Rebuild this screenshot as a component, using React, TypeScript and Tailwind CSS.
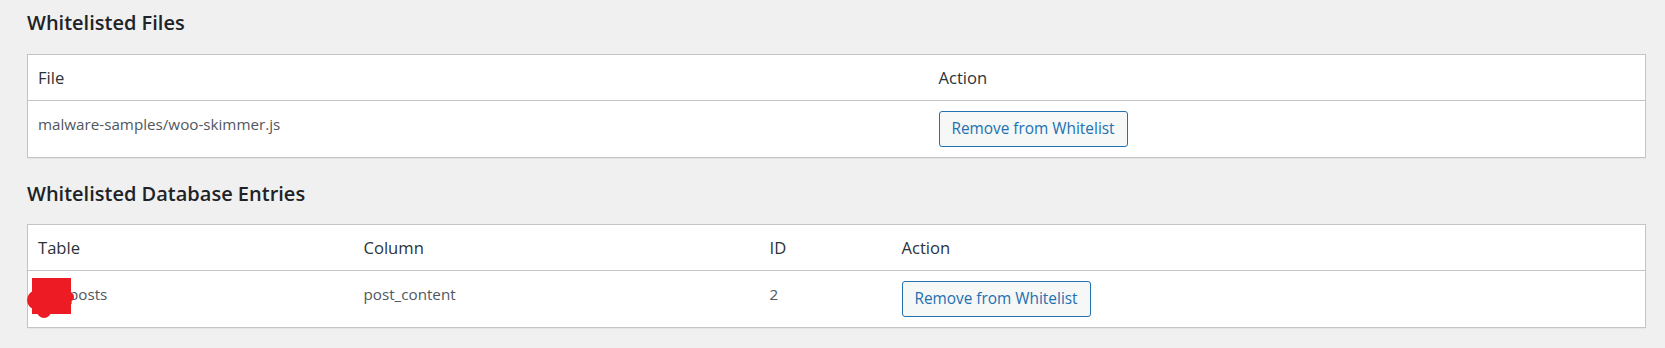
import React from "react";

const font = { fontFamily: '"Open Sans", "Noto Sans", Arial, sans-serif' };

function Btn() {
  return (
    <button className="h-[36px] w-[189px] rounded-[3px] border border-[#2271b1] bg-[#f6f7f7] text-[15.4px] leading-[34px] text-[#2271b1]">
      Remove from Whitelist
    </button>
  );
}

const th = "px-[10px] text-left align-middle text-[16.6px] leading-[20px] font-normal text-[#2c3338]";
const td = "px-[10px] pt-[13px] align-top text-[15.2px] leading-[20px] text-[#50575e]";

export default function App() {
  return (
    <div className="min-h-[348px] bg-[#f0f0f1] pl-[27px] pr-[19px] pt-[9px] pb-[20px]" style={font}>
      <h2 className="m-0 text-[20px] font-semibold leading-[28px] text-[#1d2327]">Whitelisted Files</h2>
      <table className="mt-[17px] w-full table-fixed border-collapse border border-[#c3c4c7] bg-white shadow-[0_1px_1px_rgba(0,0,0,0.04)]">
        <colgroup>
          <col className="w-[901px]" />
          <col />
        </colgroup>
        <thead>
          <tr className="h-[46px] border-b border-[#c3c4c7]">
            <th className={th}>File</th>
            <th className={th}>Action</th>
          </tr>
        </thead>
        <tbody>
          <tr className="h-[57px]">
            <td className={td}>malware-samples/woo-skimmer.js</td>
            <td className="px-[10px] pt-[10px] pb-[10px] align-top">
              <Btn />
            </td>
          </tr>
        </tbody>
      </table>

      <h2 className="mt-[22px] text-[20px] font-semibold leading-[28px] text-[#1d2327]">Whitelisted Database Entries</h2>
      <table className="mt-[16px] w-full table-fixed border-collapse border border-[#c3c4c7] bg-white shadow-[0_1px_1px_rgba(0,0,0,0.04)]">
        <colgroup>
          <col className="w-[326px]" />
          <col className="w-[406px]" />
          <col className="w-[132px]" />
          <col />
        </colgroup>
        <thead>
          <tr className="h-[46px] border-b border-[#c3c4c7]">
            <th className={th}>Table</th>
            <th className={th}>Column</th>
            <th className={th}>ID</th>
            <th className={th}>Action</th>
          </tr>
        </thead>
        <tbody>
          <tr className="h-[57px]">
            <td className={`relative ${td}`}>
              <span className="inline-block w-[31px] overflow-hidden align-top">wp_</span>posts
              <svg className="absolute left-[-1px] top-[5px]" width="50" height="44" viewBox="0 0 50 44">
                <g fill="#ed1c24">
                  <rect x="5" y="2" width="39" height="36" />
                  <circle cx="10" cy="7" r="5" />
                  <circle cx="10" cy="24" r="10" />
                  <circle cx="17" cy="35" r="7" />
                  <circle cx="43" cy="21" r="4" />
                </g>
              </svg>
            </td>
            <td className={td}>post_content</td>
            <td className={td}>2</td>
            <td className="px-[10px] pt-[10px] pb-[10px] align-top">
              <Btn />
            </td>
          </tr>
        </tbody>
      </table>
    </div>
  );
}
